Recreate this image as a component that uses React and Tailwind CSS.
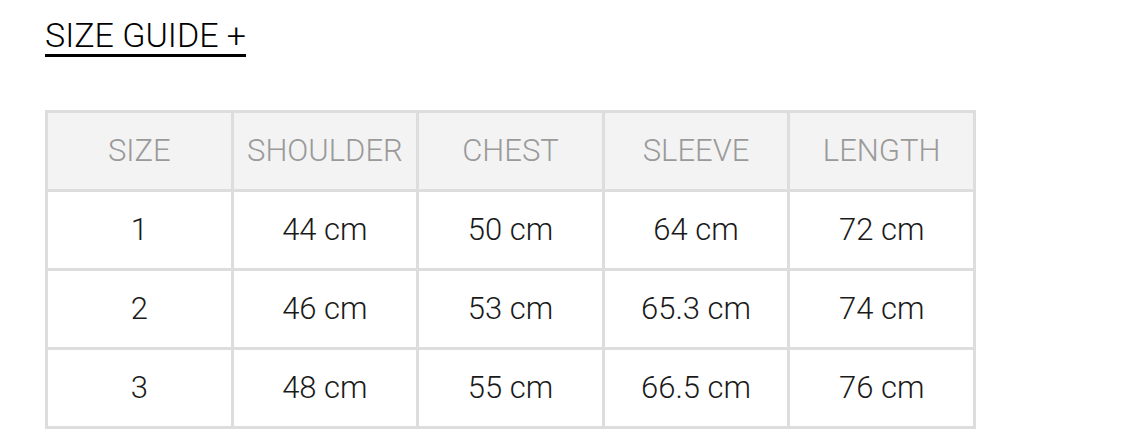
const HEAD = ['SIZE', 'SHOULDER', 'CHEST', 'SLEEVE', 'LENGTH'];
const ROWS = [
  ['1', '44 cm', '50 cm', '64 cm', '72 cm'],
  ['2', '46 cm', '53 cm', '65.3 cm', '74 cm'],
  ['3', '48 cm', '55 cm', '66.5 cm', '76 cm'],
];

export default function App() {
  return (
    <div className="min-h-screen bg-white px-[45px] pt-[17px] font-['Roboto',sans-serif] font-light">
      <button className="border-b-[3px] border-black pb-[1px] text-[34px] leading-[36px] text-black">
        SIZE GUIDE +
      </button>

      <table className="mt-[53px] w-[931px] table-fixed border-collapse border-[3px] border-[#dddddd] text-[31px]">
        <thead>
          <tr className="bg-[#f3f3f3]">
            {HEAD.map((h) => (
              <th key={h} className="h-[79px] border-[3px] border-[#dddddd] text-center font-light text-[#9a9a9a]">
                {h}
              </th>
            ))}
          </tr>
        </thead>
        <tbody>
          {ROWS.map((row, i) => (
            <tr key={i}>
              {row.map((c, j) => (
                <td key={j} className="h-[79px] border-[3px] border-[#dddddd] text-center text-[#1a1a1a]">
                  {c}
                </td>
              ))}
            </tr>
          ))}
        </tbody>
      </table>
    </div>
  );
}
